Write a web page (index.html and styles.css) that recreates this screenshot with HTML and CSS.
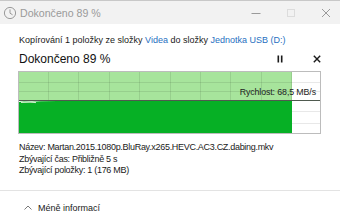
FILE: index.html
```html
<!DOCTYPE html>
<html lang="cs">
<head>
<meta charset="utf-8">
<title>Dokončeno 89 %</title>
<link rel="stylesheet" href="styles.css">
</head>
<body>
<div class="window">
  <div class="titlebar">
    <svg class="clock" width="14" height="14" viewBox="0 0 14 14"><circle cx="7" cy="7" r="5.6" fill="none" stroke="#9a9a9a" stroke-width="1"/><path d="M7 3.4V7.2L9.6 8.8" fill="none" stroke="#9a9a9a" stroke-width="1"/></svg>
    <span class="title">Dokončeno 89 %</span>
    <div class="controls">
      <svg width="12" height="12" viewBox="0 0 12 12"><path d="M1.5 6.5H10.5" stroke="#9a9a9a" stroke-width="1"/></svg>
      <svg width="12" height="12" viewBox="0 0 12 12"><rect x="2.5" y="2.5" width="7" height="7" fill="none" stroke="#dcdcdc" stroke-width="1"/></svg>
      <svg width="12" height="12" viewBox="0 0 12 12"><path d="M2 2L10 10M10 2L2 10" stroke="#9a9a9a" stroke-width="1"/></svg>
    </div>
  </div>
  <div class="content">
    <div class="copyline">Kopírování 1 položky ze složky <span class="link">Videa</span> do složky <span class="link">Jednotka USB (D:)</span></div>
    <div class="headrow">
      <span class="status">Dokončeno 89 %</span>
      <div class="actions">
        <svg width="10" height="10" viewBox="0 0 10 10"><rect x="2.5" y="1.5" width="1.6" height="7" fill="#1a1a1a"/><rect x="5.9" y="1.5" width="1.6" height="7" fill="#1a1a1a"/></svg>
        <svg width="10" height="10" viewBox="0 0 10 10"><path d="M1.8 1.8L8.2 8.2M8.2 1.8L1.8 8.2" stroke="#1a1a1a" stroke-width="1.4"/></svg>
      </div>
    </div>
    <div class="chart">
      <svg width="303" height="63" viewBox="0 0 303 63">
        <rect x="0" y="0" width="303" height="63" fill="#ffffff"/>
        <rect x="1" y="1" width="273" height="29" fill="#a7e49c"/>
        <g stroke="rgba(0,0,0,0.09)" stroke-width="1">
          <path d="M30.5 1V62M60.5 1V62M91.5 1V62M121.5 1V62M152.5 1V62M182.5 1V62M212.5 1V62M243.5 1V62M273.5 1V62"/>
          <path d="M1 11.5H302M1 20.5H302M1 40.5H302M1 52.5H302"/>
        </g>
        <path d="M1 31 L6 30.4 L14 30.8 L22 30.2 L40 30 L274 30 L274 62 L1 62 Z" fill="#06b025"/>
        <path d="M3 31.5 L12 31.2 L18 31.6" stroke="#cfeecb" stroke-width="1" fill="none"/>
        <path d="M1 29.5H302" stroke="#4f5a4f" stroke-width="1.2"/>
        <rect x="0.5" y="0.5" width="302" height="62" fill="none" stroke="#bcbcbc" stroke-width="1"/>
      </svg>
      <span class="speed">Rychlost: 68,5 MB/s</span>
    </div>
    <div class="details">
      <div>Název: Martan.2015.1080p.BluRay.x265.HEVC.AC3.CZ.dabing.mkv</div>
      <div>Zbývající čas: Přibližně 5 s</div>
      <div>Zbývající položky: 1 (176 MB)</div>
    </div>
  </div>
  <div class="footer">
    <svg class="chev" width="10" height="8" viewBox="0 0 10 8"><path d="M1.5 5.5L5 2L8.5 5.5" fill="none" stroke="#7a7a7a" stroke-width="1"/></svg>
    <span>Méně informací</span>
  </div>
</div>
</body>
</html>
```
FILE: styles.css
```css
* { box-sizing: border-box; }
html, body {
  margin: 0;
  padding: 0;
  background: #ffffff;
}
body {
  width: 340px;
  height: 223px;
  overflow: hidden;
  font-family: "Liberation Sans", Arial, sans-serif;
  color: #1a1a1a;
}
.window {
  display: flex;
  flex-direction: column;
  width: 340px;
  height: 223px;
}
.titlebar {
  display: flex;
  align-items: center;
  height: 24px;
  background: #f2f2f2;
  border-top: 1px solid #c8c8c8;
  padding-left: 3px;
}
.clock { margin-right: 3px; }
.title {
  font-size: 10.6px;
  color: #9a9a9a;
}
.controls {
  margin-left: auto;
  display: flex;
  gap: 23px;
  padding-right: 8px;
}
.content {
  padding: 0 18px 0 19px;
}
.copyline {
  margin-top: 10px;
  font-size: 9px;
  line-height: 12px;
  color: #1a1a1a;
}
.link { color: #1f6fbf; }
.headrow {
  display: flex;
  align-items: center;
  margin-top: 4px;
  height: 18px;
}
.status {
  font-size: 12px;
  color: #111;
}
.actions {
  margin-left: auto;
  display: flex;
  gap: 27px;
}
.chart {
  position: relative;
  margin-top: 3px;
  width: 303px;
  height: 63px;
  margin-left: -1px;
}
.chart svg { display: block; }
.speed {
  position: absolute;
  right: 5px;
  top: 15px;
  font-size: 8.8px;
  letter-spacing: -0.1px;
  line-height: 12px;
  color: #222;
}
.details {
  margin-top: 8px;
  font-size: 9px;
  letter-spacing: -0.3px;
  line-height: 11.5px;
  color: #1a1a1a;
}
.footer {
  margin-top: auto;
  height: 33px;
  border-top: 1px solid #e3e3e3;
  display: flex;
  align-items: center;
  padding: 2px 0 0 23px;
  font-size: 9px;
  color: #1a1a1a;
}
.chev { margin-right: 5px; }
```
